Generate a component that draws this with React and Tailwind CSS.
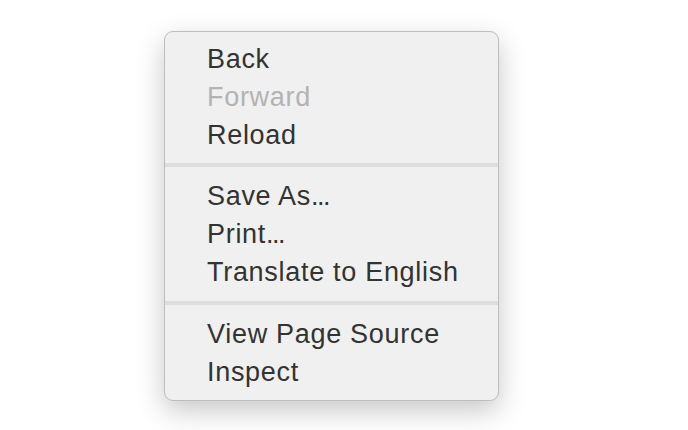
export default function App() {
  const font = { fontFamily: '"Liberation Sans", Arial, sans-serif' };
  const Item = ({ children, disabled }) => (
    <div
      className={`h-[38px] pl-[42px] text-[27px] leading-[38px] tracking-[0.7px] ${disabled ? "text-[#b3b3b3]" : "text-[#333333]"}`}
    >
      {children}
    </div>
  );
  const Dots = () => <span className="tracking-[-1.5px]">...</span>;
  const Sep = ({ mt, mb }) => (
    <div className={`h-[4px] bg-[#dedede] ${mt} ${mb}`} />
  );
  return (
    <div className="w-[688px] h-[430px] bg-white overflow-hidden pt-[31px] pl-[164px]" style={font}>
      <div className="w-[335px] h-[370px] rounded-[9px] bg-[#f0f0f0] border border-[#bdbdbd] pt-[8px] shadow-[0_10px_28px_rgba(0,0,0,0.22)] overflow-hidden">
        <Item>Back</Item>
        <Item disabled>Forward</Item>
        <Item>Reload</Item>
        <Sep mt="mt-[9px]" mb="mb-[10px]" />
        <Item>Save As<Dots /></Item>
        <Item>Print<Dots /></Item>
        <Item>Translate to English</Item>
        <Sep mt="mt-[10px]" mb="mb-[10px]" />
        <Item>View Page Source</Item>
        <Item>Inspect</Item>
      </div>
    </div>
  );
}
